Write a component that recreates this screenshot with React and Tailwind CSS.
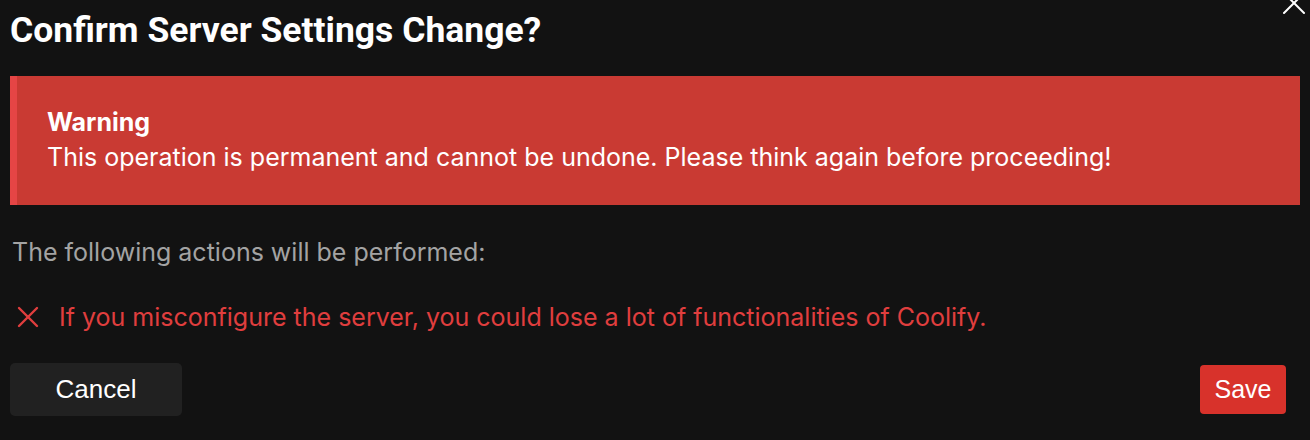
import React from 'react';

const ConfirmModal = () => {
    return (
        <div className="relative w-[1310px] h-[440px] overflow-hidden bg-[#121212] text-white px-[10px]" style={{ fontFamily: 'Inter, "Noto Sans", sans-serif' }}>
            {/* close button, half cut off at the top */}
            <button className="absolute right-[4px] top-[-9px] text-white">
                <svg width="24" height="24" viewBox="0 0 24 24" fill="none" stroke="currentColor" strokeWidth="2" strokeLinecap="round">
                    <path d="M2 22 L22 2" />
                    <path d="M2 2 L22 22" />
                </svg>
            </button>

            <h1 className="pt-[10px] text-[35.5px] leading-[40px] font-bold" style={{ fontFamily: 'Roboto, sans-serif' }}>Confirm Server Settings Change?</h1>

            <div className="mt-[26px] h-[129px] bg-[#c93a33] border-l-[7px] border-[#e54545] pl-[30px] pt-[30px]">
                <p className="text-[25px] leading-[32px] font-bold">Warning</p>
                <p className="text-[25px] leading-[38px]">This operation is permanent and cannot be undone. Please think again before proceeding!</p>
            </div>

            <p className="mt-[32px] px-[2px] text-[25px] leading-[30px] text-[#a3a3a3]">The following actions will be performed:</p>

            <div className="mt-[35px] flex items-center gap-[20px] pl-[7px] text-[25px] leading-[30px] text-[#e03e3e]">
                <svg width="22" height="22" viewBox="0 0 22 22" fill="none" stroke="currentColor" strokeWidth="2.4" strokeLinecap="round">
                    <path d="M2 2 L20 20" />
                    <path d="M20 2 L2 20" />
                </svg>
                <span>If you misconfigure the server, you could lose a lot of functionalities of Coolify.</span>
            </div>

            <div className="mt-[31px] flex items-center justify-between pr-[14px]">
                <button className="w-[172px] h-[53px] rounded-[5px] bg-[#212121] text-[26px] text-white" style={{ fontFamily: '"Liberation Sans", Arial, sans-serif' }}>Cancel</button>
                <button className="w-[86px] h-[49px] rounded-[4px] bg-[#d8322b] text-[25px] text-white" style={{ fontFamily: '"Liberation Sans", Arial, sans-serif' }}>Save</button>
            </div>
        </div>
    );
};

export default function App() {
    return <ConfirmModal />;
}
